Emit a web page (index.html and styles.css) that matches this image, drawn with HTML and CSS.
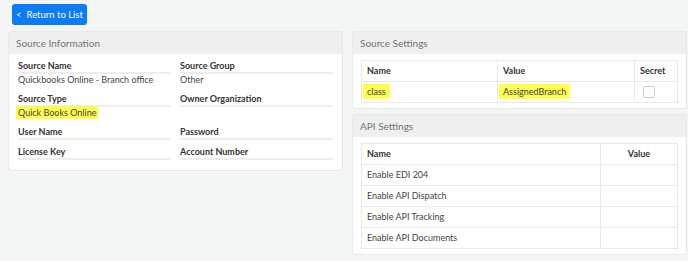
FILE: index.html
```html
<!DOCTYPE html>
<html>
<head>
<meta charset="utf-8">
<link rel="stylesheet" href="styles.css">
</head>
<body>
<div class="toolbar">
	<button class="btn_back" type="button">&lt;&nbsp; Return to List</button>
</div>

<div class="columns">
	<div class="card">
		<div class="card_head">Source Information</div>
		<div class="fields">
			<div class="field">
				<div class="field_label">Source Name</div>
				<div class="field_value">Quickbooks Online - Branch office</div>
			</div>
			<div class="field">
				<div class="field_label">Source Group</div>
				<div class="field_value">Other</div>
			</div>
			<div class="field">
				<div class="field_label">Source Type</div>
				<div class="field_value"><span class="mark mark_inline">Quick Books Online</span></div>
			</div>
			<div class="field">
				<div class="field_label">Owner Organization</div>
				<div class="field_value"></div>
			</div>
			<div class="field">
				<div class="field_label">User Name</div>
			</div>
			<div class="field">
				<div class="field_label">Password</div>
			</div>
			<div class="field">
				<div class="field_label">License Key</div>
			</div>
			<div class="field">
				<div class="field_label">Account Number</div>
			</div>
		</div>
	</div>

	<div class="stack">
		<div class="card">
			<div class="card_head">Source Settings</div>
			<div class="card_body">
				<table class="grid_table">
					<colgroup><col class="c_name"><col class="c_value"><col></colgroup>
					<tr><th>Name</th><th>Value</th><th>Secret</th></tr>
					<tr>
						<td class="td_mark"><span class="mark">class</span></td>
						<td class="td_mark"><span class="mark">AssignedBranch</span></td>
						<td class="td_check"><span class="checkbox"></span></td>
					</tr>
				</table>
			</div>
		</div>

		<div class="card">
			<div class="card_head">API Settings</div>
			<div class="card_body">
				<table class="grid_table">
					<colgroup><col><col class="c_api_value"></colgroup>
					<tr><th>Name</th><th class="center">Value</th></tr>
					<tr><td>Enable EDI 204</td><td></td></tr>
					<tr><td>Enable API Dispatch</td><td></td></tr>
					<tr><td>Enable API Tracking</td><td></td></tr>
					<tr><td>Enable API Documents</td><td></td></tr>
				</table>
			</div>
		</div>
	</div>
</div>
</body>
</html>
```

FILE: styles.css
```css
body{
	margin:0;
	background:#f4f5f5;
	font-family:Lato, "Noto Sans", sans-serif;
	font-size:9px;
	color:#444;
}

.toolbar{
	padding:4px 0 0 12px;
	height:21px;
}
.btn_back{
	height:21px;
	width:75px;
	padding:0;
	border:none;
	border-radius:3px;
	background:#0b7bf6;
	color:#fff;
	font-family:inherit;
	font-size:9.5px;
}

.columns{
	display:grid;
	grid-template-columns:335px 335px;
	column-gap:9px;
	align-items:start;
	padding:6px 0 0 8px;
}
.stack{
	display:flex;
	flex-direction:column;
	gap:5px;
}

.card{
	background:#fff;
	border:1px solid #e8e9e9;
	border-radius:3px;
	overflow:hidden;
}
.card_head{
	height:22px;
	line-height:22px;
	padding-left:7px;
	background:#efefef;
	color:#6e757b;
	font-size:10px;
}
.card_body{
	padding:6px 8px 5px 8px;
}

.fields{
	display:grid;
	grid-template-columns:153px 153px;
	column-gap:9px;
	padding:0 0 10px 9px;
}
.field_label{
	padding-top:6px;
	height:12px;
	line-height:12px;
	border-bottom:2px solid #ebedef;
	font-weight:bold;
	color:#333;
}
.field_value{
	height:13px;
	line-height:12px;
	color:#444;
}

.mark{
	background:#fdfd52;
	padding:2px 4px;
}
.mark_inline{
	padding:1px 2px;
	margin-left:-2px;
}

.grid_table{
	width:100%;
	border-collapse:collapse;
}
.grid_table th,
.grid_table td{
	height:20px;
	line-height:12px;
	padding:0 5px;
	border:1px solid #e6e8ea;
	text-align:left;
	color:#444;
}
.grid_table th{
	font-weight:bold;
	color:#333;
}
.grid_table .center{
	text-align:center;
}
.grid_table .td_mark{
	padding-left:1px;
}
.grid_table .td_check{
	padding-left:8px;
}
.c_name{ width:136px; }
.c_value{ width:137px; }
.c_api_value{ width:77px; }

.checkbox{
	display:inline-block;
	width:10px;
	height:10px;
	border:1px solid #c9cdd1;
	border-radius:2px;
	vertical-align:middle;
}
```
